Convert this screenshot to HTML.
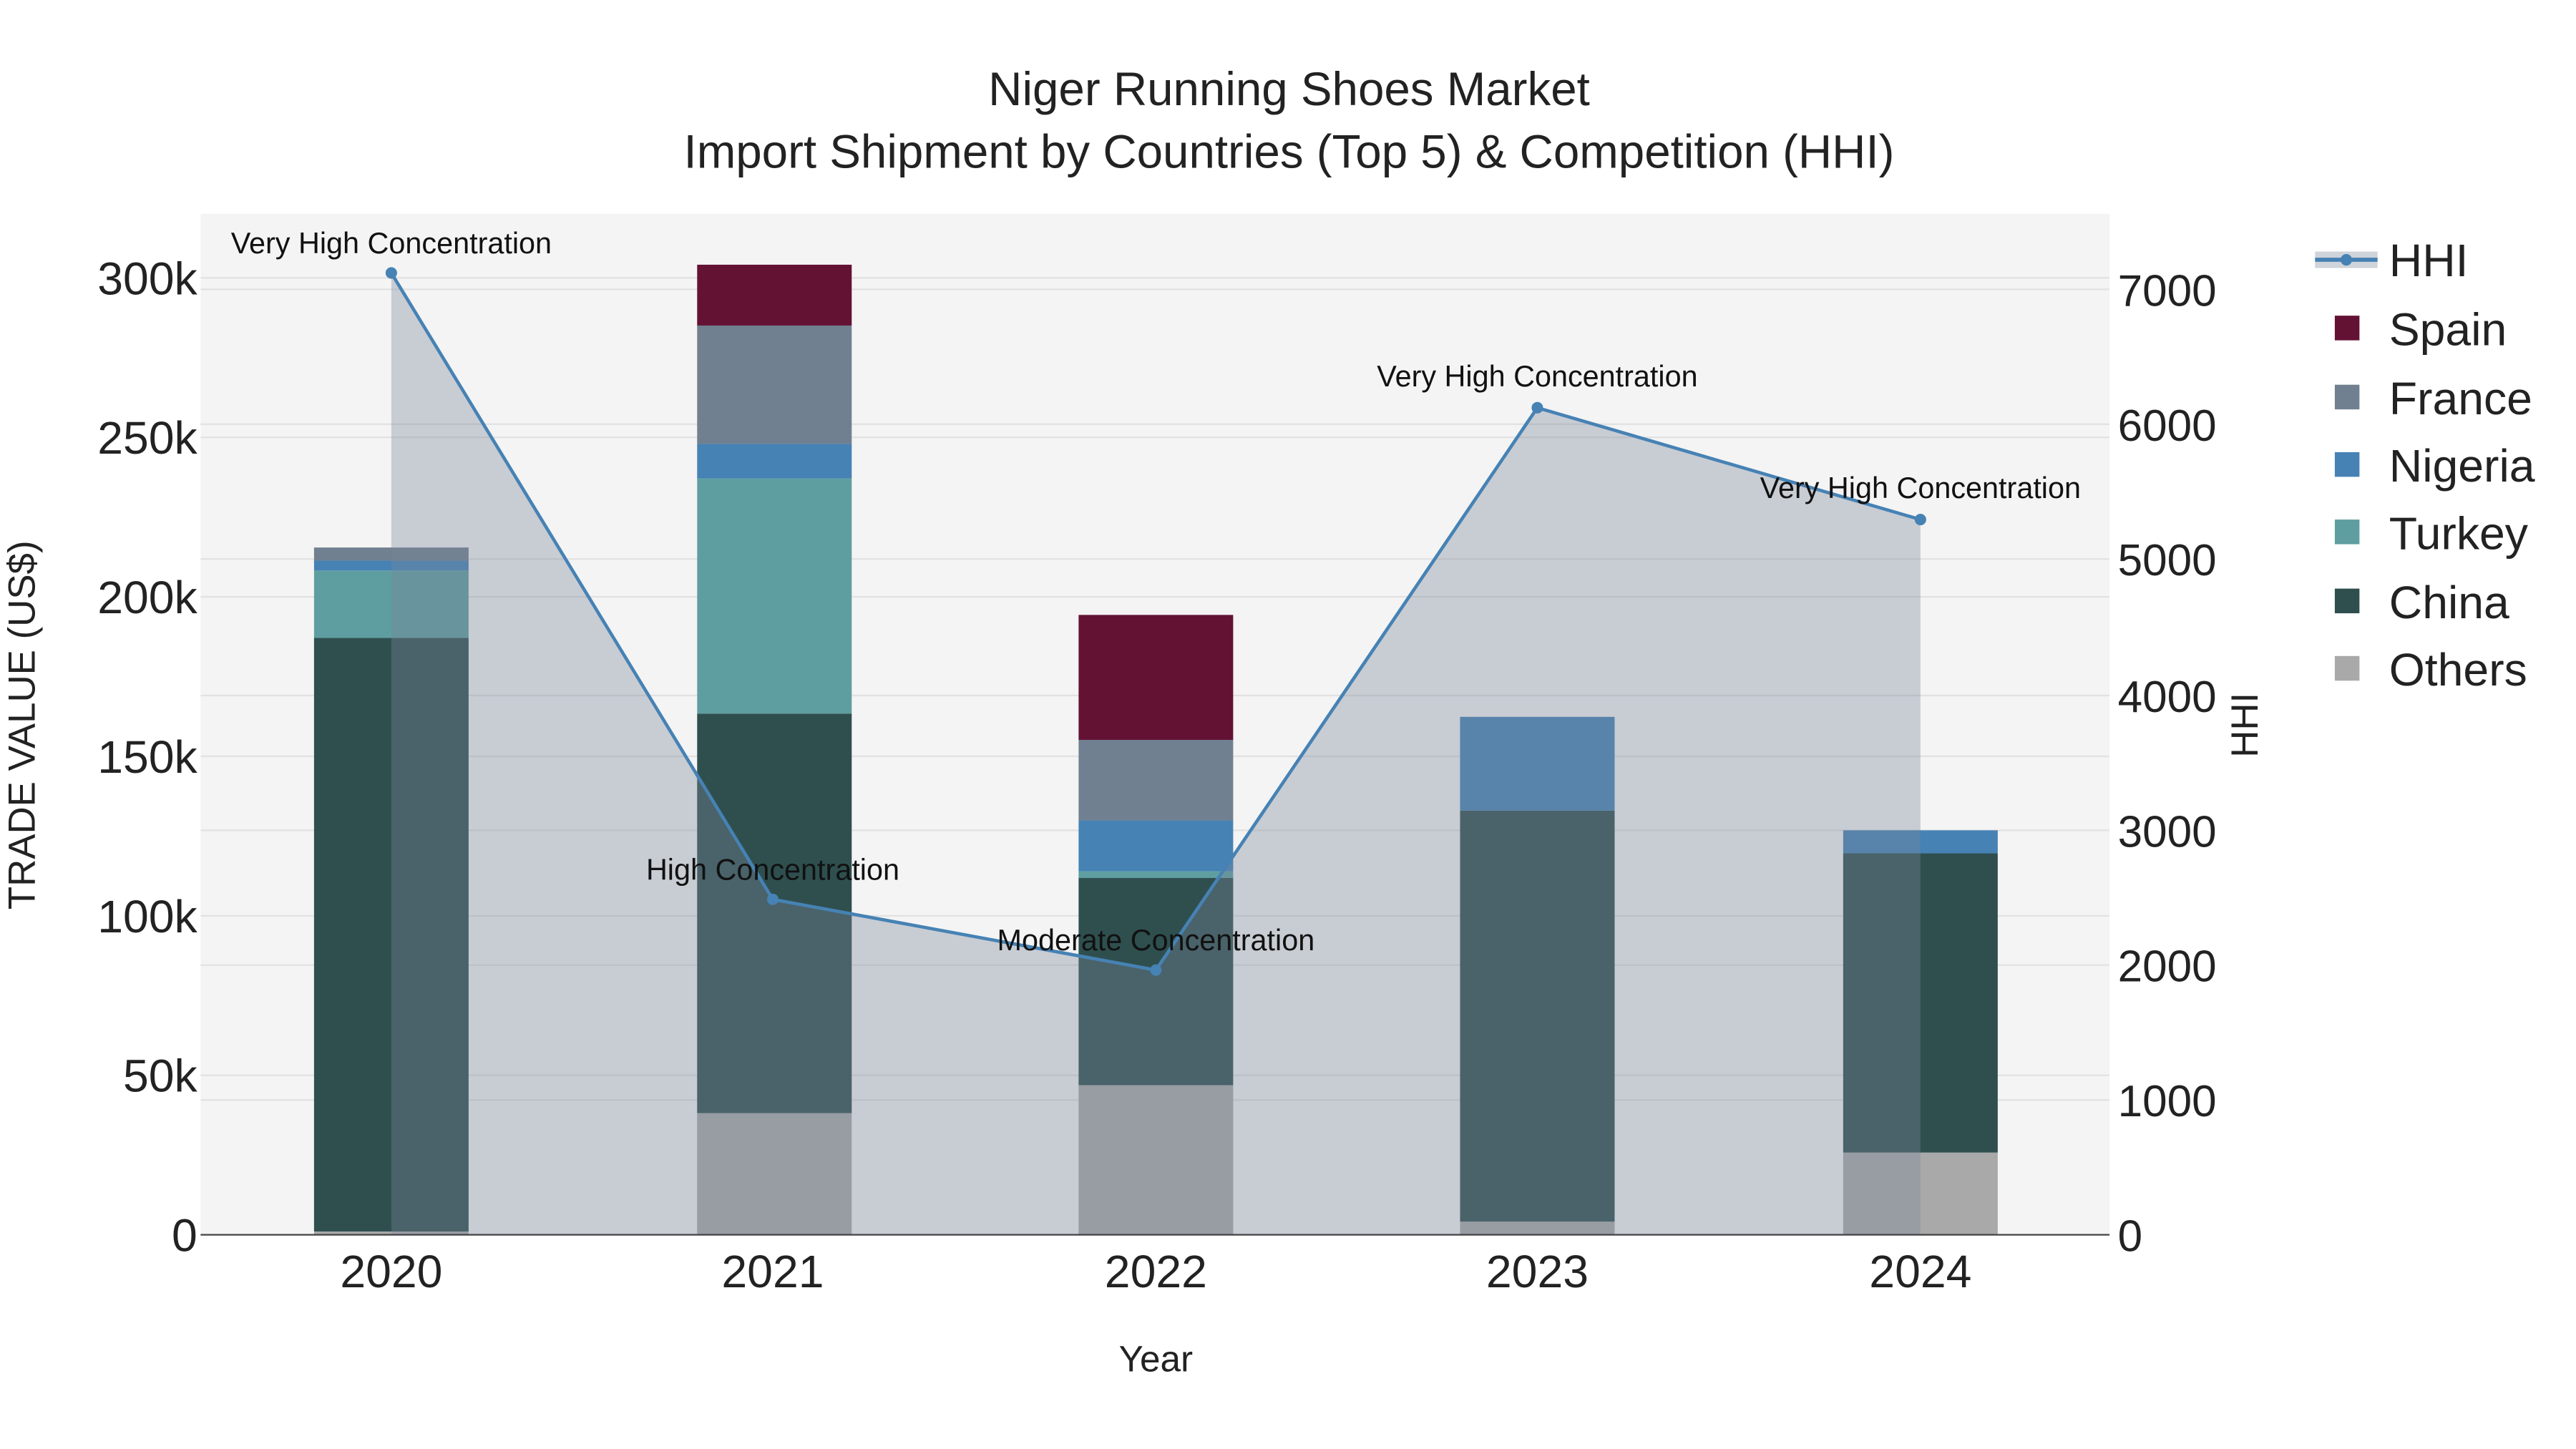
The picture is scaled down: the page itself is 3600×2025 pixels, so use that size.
<!DOCTYPE html>
<html><head><meta charset="utf-8"><style>
html,body{margin:0;padding:0;background:#fff;}
svg{display:block;}
text{font-family:"Liberation Sans",Arial,sans-serif;}
</style></head><body>
<svg width="3600" height="2025" viewBox="0 0 1566.7 881.3" preserveAspectRatio="none" xmlns="http://www.w3.org/2000/svg">
<rect width="1570" height="885" fill="#fff"/>
<rect x="122" y="130" width="1161" height="621" fill="#f4f4f4"/>
<g stroke="#e2e2e2" stroke-width="1">
<line x1="122" x2="1283" y1="654" y2="654"/><line x1="122" x2="1283" y1="557" y2="557"/>
<line x1="122" x2="1283" y1="460" y2="460"/><line x1="122" x2="1283" y1="363" y2="363"/>
<line x1="122" x2="1283" y1="266" y2="266"/><line x1="122" x2="1283" y1="169" y2="169"/>
<line x1="122" x2="1283" y1="669" y2="669"/><line x1="122" x2="1283" y1="587" y2="587"/>
<line x1="122" x2="1283" y1="505" y2="505"/><line x1="122" x2="1283" y1="423" y2="423"/>
<line x1="122" x2="1283" y1="340" y2="340"/><line x1="122" x2="1283" y1="258" y2="258"/>
<line x1="122" x2="1283" y1="176" y2="176"/>
</g>
<g>
<rect x="191" y="749" width="94" height="2" fill="#a9a9a9"/>
<rect x="191" y="388" width="94" height="361" fill="#2f4f4f"/>
<rect x="191" y="347" width="94" height="41" fill="#5f9ea0"/>
<rect x="191" y="341" width="94" height="6" fill="#4682b4"/>
<rect x="191" y="333" width="94" height="8" fill="#708090"/>

<rect x="424" y="677" width="94" height="74" fill="#a9a9a9"/>
<rect x="424" y="434" width="94" height="243" fill="#2f4f4f"/>
<rect x="424" y="291" width="94" height="143" fill="#5f9ea0"/>
<rect x="424" y="270" width="94" height="21" fill="#4682b4"/>
<rect x="424" y="198" width="94" height="72" fill="#708090"/>
<rect x="424" y="161" width="94" height="37" fill="#631234"/>

<rect x="656" y="660" width="94" height="91" fill="#a9a9a9"/>
<rect x="656" y="534" width="94" height="126" fill="#2f4f4f"/>
<rect x="656" y="530" width="94" height="4" fill="#5f9ea0"/>
<rect x="656" y="499" width="94" height="31" fill="#4682b4"/>
<rect x="656" y="450" width="94" height="49" fill="#708090"/>
<rect x="656" y="374" width="94" height="76" fill="#631234"/>

<rect x="888" y="743" width="94" height="8" fill="#a9a9a9"/>
<rect x="888" y="493" width="94" height="250" fill="#2f4f4f"/>
<rect x="888" y="436" width="94" height="57" fill="#4682b4"/>

<rect x="1121" y="701" width="94" height="50" fill="#a9a9a9"/>
<rect x="1121" y="519" width="94" height="182" fill="#2f4f4f"/>
<rect x="1121" y="505" width="94" height="14" fill="#4682b4"/>
</g>
<polygon points="238,751 238,166 470,547 703,590 935,248 1168,316 1168,751" fill="rgb(122,133,153)" fill-opacity="0.36"/>
<polyline points="238,166 470,547 703,590 935,248 1168,316" fill="none" stroke="#4682b4" stroke-width="2"/>
<g fill="#4682b4"><circle cx="238" cy="166" r="3.5"/><circle cx="470" cy="547" r="3.5"/><circle cx="703" cy="590" r="3.5"/><circle cx="935" cy="248" r="3.5"/><circle cx="1168" cy="316" r="3.5"/></g>
<line x1="122" x2="1283" y1="751" y2="751" stroke="#444" stroke-width="1"/>
<g font-size="18" text-anchor="middle" fill="#111">
<text x="238" y="154">Very High Concentration</text>
<text x="470" y="535">High Concentration</text>
<text x="703" y="578">Moderate Concentration</text>
<text x="935" y="235">Very High Concentration</text>
<text x="1168" y="303">Very High Concentration</text>
</g>
<g font-size="28.5" text-anchor="middle" fill="#222">
<text x="784" y="64">Niger Running Shoes Market</text>
<text x="784" y="102">Import Shipment by Countries (Top 5) &amp; Competition (HHI)</text>
</g>
<g font-size="28" text-anchor="end" fill="#222">
<text x="120" y="761">0</text><text x="120" y="664">50k</text><text x="120" y="567">100k</text>
<text x="120" y="470">150k</text><text x="120" y="373">200k</text><text x="120" y="276">250k</text><text x="120" y="179">300k</text>
</g>
<g font-size="27" fill="#222">
<text x="1288" y="761">0</text><text x="1288" y="679">1000</text><text x="1288" y="597">2000</text>
<text x="1288" y="515">3000</text><text x="1288" y="433">4000</text><text x="1288" y="350">5000</text>
<text x="1288" y="268">6000</text><text x="1288" y="186">7000</text>
</g>
<g font-size="28" text-anchor="middle" fill="#222">
<text x="238" y="783">2020</text><text x="470" y="783">2021</text><text x="703" y="783">2022</text><text x="935" y="783">2023</text><text x="1168" y="783">2024</text>
</g>
<text x="703" y="834" font-size="22.3" text-anchor="middle" fill="#222">Year</text>
<text transform="translate(21,441) rotate(-90)" font-size="23" text-anchor="middle" fill="#222">TRADE VALUE (US$)</text>
<text transform="translate(1373,441) rotate(-90)" font-size="23" text-anchor="middle" fill="#222">HHI</text>
<rect x="1408" y="153" width="38" height="10" fill="rgb(122,133,153)" fill-opacity="0.36"/>
<line x1="1408" x2="1446" y1="158" y2="158" stroke="#4682b4" stroke-width="2.5"/>
<circle cx="1427" cy="158" r="3.5" fill="#4682b4"/>
<rect x="1420" y="192" width="15" height="15" fill="#631234"/>
<rect x="1420" y="234" width="15" height="15" fill="#708090"/>
<rect x="1420" y="275" width="15" height="15" fill="#4682b4"/>
<rect x="1420" y="316" width="15" height="15" fill="#5f9ea0"/>
<rect x="1420" y="358" width="15" height="15" fill="#2f4f4f"/>
<rect x="1420" y="399" width="15" height="15" fill="#a9a9a9"/>
<g font-size="28" fill="#222">
<text x="1453" y="168">HHI</text><text x="1453" y="210">Spain</text><text x="1453" y="252">France</text>
<text x="1453" y="293">Nigeria</text><text x="1453" y="334">Turkey</text><text x="1453" y="376">China</text><text x="1453" y="417">Others</text>
</g>
</svg>
</body></html>
